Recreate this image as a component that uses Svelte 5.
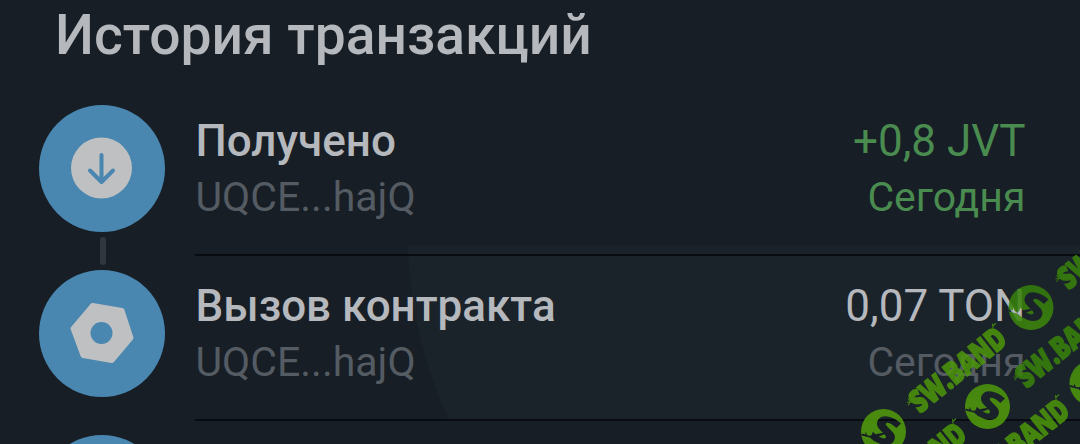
<script lang="ts">
  type Kind = 'received' | 'contract';

  interface Transaction {
    id: number;
    kind: Kind;
    title: string;
    address: string;
    amount: string;
    date: string;
    incoming: boolean;
    linked: boolean;
    pressed: boolean;
  }

  const transactions: Transaction[] = [
    { id: 1, kind: 'received', title: 'Получено', address: 'UQCE...hajQ', amount: '+0,8 JVT', date: 'Сегодня', incoming: true, linked: true, pressed: false },
    { id: 2, kind: 'contract', title: 'Вызов контракта', address: 'UQCE...hajQ', amount: '0,07 TON', date: 'Сегодня', incoming: false, linked: false, pressed: true },
  ];

  // watermark tiles along the diagonal
  const stamps = [[883.5, 431.5], [1031, 307.5], [987.5, 406.5], [1092, 383]];
  const labels = [[957.5, 369.5], [1106, 246], [1064, 344.5], [917.5, 465], [1020.5, 441]];
</script>

<main class="screen">
  <h1 class="heading">История транзакций</h1>

  <div class="list">
    {#each transactions as tx (tx.id)}
      <div class="row">
        {#if tx.pressed}
          <svg class="ripple" width="672" height="176" viewBox="0 0 672 176" aria-hidden="true">
            <path d="M0 0H672V176H41Q1 86 0 0Z" />
          </svg>
        {/if}
        <div class="rail">
          <div class="avatar">
            {#if tx.kind === 'received'}
              <svg width="62" height="62" viewBox="0 0 62 62" aria-hidden="true">
                <circle cx="30.5" cy="31" r="30.5" class="shape" />
                <path d="M30.5 18V45M19 33.5L30.5 45L42 33.5" class="arrow" />
              </svg>
            {:else}
              <svg width="64" height="64" viewBox="0 0 64 64" aria-hidden="true">
                <path d="M22.5 4.5L52 9.5L61 37L42 59.5L13 54.5L3 27.5Z" class="shape nut" />
                <circle cx="31.5" cy="32" r="11" class="hole" />
              </svg>
            {/if}
          </div>
          {#if tx.linked}
            <span class="link"></span>
          {/if}
        </div>
        <div class="body">
          <div class="info">
            <div class="title">{tx.title}</div>
            <div class="address">{tx.address}</div>
          </div>
          <div class="value" class:incoming={tx.incoming}>
            <div class="amount">{tx.amount}</div>
            <div class="date">{tx.date}</div>
          </div>
        </div>
      </div>
    {/each}
    <div class="row">
      <div class="rail"><div class="avatar"></div></div>
    </div>
  </div>

  <svg class="watermark" width="1080" height="444" viewBox="0 0 1080 444" aria-hidden="true">
    <defs>
      <linearGradient id="ink" gradientUnits="userSpaceOnUse" x1="0" y1="290" x2="0" y2="410">
        <stop offset="0" stop-color="#357f0c" />
        <stop offset="1" stop-color="#529d0b" />
      </linearGradient>
      <mask id="stamp-cut">
        <rect width="1080" height="444" fill="#fff" />
        {#each stamps as [x, y]}
          <g transform="translate({x} {y})">
            <text class="monogram" transform="translate(2 -1) rotate(22) scale(1.18 1)" y="14" text-anchor="middle">S</text>
            <path d="M-22 2L-18 3L-18 0L-16 4C-9 5 -5 0 3 2C-4 4 -8 8 -14 6L-22 4Z" />
          </g>
        {/each}
      </mask>
    </defs>
    <g mask="url(#stamp-cut)">
      {#each stamps as [x, y]}
        <circle cx={x} cy={y} r="22.5" fill="url(#ink)" />
      {/each}
    </g>
    {#each labels as [x, y]}
      <g transform="translate({x} {y}) rotate(-38.7)" class:lower={y > 355}>
        <text class="label" y="11" text-anchor="middle" textLength="114" lengthAdjust="spacingAndGlyphs">SW.BAND</text>
        <path d="M-54 -2L-60 -6M-57 -4L-61 -3M-57 -4L-57 -8M53 -9L56 -14M55 -12L59 -12" />
      </g>
    {/each}
  </svg>
</main>

<style>
  :global(body) {
    background: #171e25;
  }

  .screen {
    position: relative;
    width: 1080px;
    height: 444px;
    overflow: hidden;
    background: #171e25;
    font-family: Roboto, sans-serif;
  }

  .heading {
    margin: 0;
    padding-left: 55px;
    height: 85.5px;
    font-size: 55.2px;
    font-weight: 500;
    line-height: 70px;
    color: #b5b8bc;
    white-space: nowrap;
  }

  .list {
    display: flex;
    flex-direction: column;
  }

  .row {
    position: relative;
    display: flex;
    flex: none;
    height: 165px;
  }

  .ripple {
    position: absolute;
    left: 408px;
    top: -6px;
    fill: #1b232a;
  }

  .rail {
    width: 195px;
    padding: 19px 0 0 39px;
    box-sizing: border-box;
  }

  .avatar {
    display: flex;
    align-items: center;
    justify-content: center;
    width: 126px;
    height: 127px;
    border-radius: 50%;
    background: #4986b0;
  }

  .shape {
    fill: #bfc0c1;
  }

  .nut {
    stroke: #bfc0c1;
    stroke-width: 5;
    stroke-linejoin: round;
  }

  .hole {
    fill: #4986b0;
  }

  .arrow {
    fill: none;
    stroke: #4986b0;
    stroke-width: 4;
    stroke-linecap: round;
    stroke-linejoin: round;
  }

  .link {
    display: block;
    width: 6px;
    height: 28px;
    margin: 5px 0 0 61px;
    border-radius: 3px;
    background: #30373e;
  }

  .body {
    position: relative;
    z-index: 1;
    flex: 1;
    display: flex;
    justify-content: space-between;
    height: 141px;
    padding: 27px 54.5px 0 0.5px;
    border-bottom: 2px solid #080c11;
  }

  .title,
  .amount {
    height: 56px;
    font-size: 44px;
    line-height: 56px;
    white-space: nowrap;
    color: #b5b8bc;
  }

  .title {
    font-weight: 500;
  }

  .address,
  .date {
    height: 56px;
    font-size: 41px;
    line-height: 56px;
    color: #545b62;
  }

  .value {
    text-align: right;
  }

  .incoming .amount,
  .incoming .date {
    color: #4a8b50;
  }

  .watermark {
    position: absolute;
    z-index: 2;
    inset: 0;
    fill: #39830c;
    stroke: #39830c;
    opacity: 0.86;
  }

  .watermark .lower {
    fill: #4c960b;
    stroke: #4c960b;
  }

  .watermark circle,
  .watermark mask {
    stroke: none;
  }

  .watermark mask path {
    fill: #000;
  }

  .watermark text {
    font-family: "Open Sans", sans-serif;
    font-weight: 800;
  }

  .label {
    font-size: 31px;
    stroke-width: 1.8;
  }

  .monogram {
    font-size: 39px;
    fill: #000;
  }
</style>
